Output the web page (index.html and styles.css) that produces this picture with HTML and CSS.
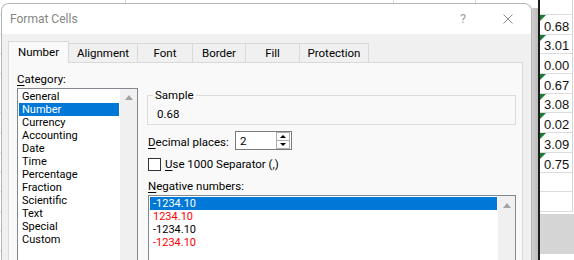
FILE: index.html
```html
<!DOCTYPE html>
<html lang="en">
<head>
    <meta charset="UTF-8">
    <meta name="viewport" content="width=device-width, initial-scale=1.0">
    <title>Format Cells</title>
    <link rel="stylesheet" href="styles.css">
</head>
<body>
    <div class="desk">
        <div class="edge"></div>
        <div class="dialog">
            <div class="titlebar">
                <span class="title">Format Cells</span>
                <span class="help">?</span>
                <svg class="close" width="10" height="10" viewBox="0 0 10 10">
                    <path d="M0.5 0.5 L9.5 9.5 M9.5 0.5 L0.5 9.5" stroke="#8c8c8c" stroke-width="1" fill="none" />
                </svg>
            </div>
            <div class="dialog-body">
                <div class="tabs">
                    <div class="tab active tab-number">Number</div>
                    <div class="tab tab-alignment">Alignment</div>
                    <div class="tab tab-font">Font</div>
                    <div class="tab tab-border">Border</div>
                    <div class="tab tab-fill">Fill</div>
                    <div class="tab tab-protection">Protection</div>
                </div>
                <div class="panel">
                    <div class="col-left">
                        <div class="label"><u>C</u>ategory:</div>
                        <div class="listbox list-category">
                            <ul class="items">
                                <li>General</li>
                                <li class="selected">Number</li>
                                <li>Currency</li>
                                <li>Accounting</li>
                                <li>Date</li>
                                <li>Time</li>
                                <li>Percentage</li>
                                <li>Fraction</li>
                                <li>Scientific</li>
                                <li>Text</li>
                                <li>Special</li>
                                <li>Custom</li>
                            </ul>
                            <div class="scrollbar"><span class="arrow-up"></span></div>
                        </div>
                    </div>
                    <div class="col-right">
                        <fieldset class="sample">
                            <legend>Sample</legend>
                            <div class="sample-value">0.68</div>
                        </fieldset>
                        <div class="row-decimal">
                            <label class="decimal-label"><u>D</u>ecimal places:</label>
                            <div class="spin">
                                <span class="spin-value">2</span>
                                <div class="spin-btns">
                                    <span class="spin-btn"><span class="tri-up"></span></span>
                                    <span class="spin-btn"><span class="tri-down"></span></span>
                                </div>
                            </div>
                        </div>
                        <div class="row-check">
                            <span class="checkbox"></span>
                            <span><u>U</u>se 1000 Separator (,)</span>
                        </div>
                        <div class="label label-negative"><u>N</u>egative numbers:</div>
                        <div class="listbox list-negative">
                            <ul class="items">
                                <li class="selected">-1234.10</li>
                                <li class="red">1234.10</li>
                                <li>-1234.10</li>
                                <li class="red">-1234.10</li>
                            </ul>
                            <div class="scrollbar"><span class="arrow-up"></span></div>
                        </div>
                    </div>
                </div>
            </div>
        </div>
        <div class="shade"></div>
        <div class="sheet">
            <div class="cell cell-head"></div>
            <div class="cell flag">0.68</div>
            <div class="cell flag">3.01</div>
            <div class="cell">0.00</div>
            <div class="cell flag">0.67</div>
            <div class="cell flag">3.08</div>
            <div class="cell flag">0.02</div>
            <div class="cell flag">3.09</div>
            <div class="cell flag">0.75</div>
            <div class="cell"></div>
            <div class="cell"></div>
            <div class="grey-block"></div>
        </div>
    </div>
</body>
</html>
```

FILE: styles.css
```css
* {
    box-sizing: border-box;
}
body {
    margin: 0;
    width: 574px;
    height: 260px;
    overflow: hidden;
    font-family: Roboto, "Noto Sans", sans-serif;
    font-size: 11.5px;
    color: #000;
    background:
        linear-gradient(#d6d6d6, #d6d6d6) 125px 0 / 1px 100% no-repeat,
        linear-gradient(#d6d6d6, #d6d6d6) 393px 0 / 1px 100% no-repeat,
        linear-gradient(#d6d6d6, #d6d6d6) 475px 0 / 1px 100% no-repeat,
        repeating-linear-gradient(to bottom, #fff 0 18.7px, #dcdcdc 18.7px 19.7px) 0 -4.7px,
        #fff;
}
ul {
    list-style: none;
    margin: 0;
    padding: 0;
}
u {
    text-decoration: underline;
    text-underline-offset: 2px;
}

.desk {
    display: flex;
    align-items: flex-start;
    height: 260px;
}
.edge {
    width: 1px;
}

/* dialog window */
.dialog {
    width: 531px;
    height: 270px;
    margin-top: 3px;
    border: 1px solid #b5b5b5;
    border-bottom: 0;
    border-radius: 8px 8px 0 0;
    background: #f0f0f0;
    overflow: hidden;
}
.titlebar {
    display: flex;
    align-items: center;
    height: 30px;
    padding: 0 18px 0 8px;
    background: #fff;
}
.title {
    color: #858585;
    font-size: 12px;
}
.help {
    margin-left: auto;
    margin-right: 37px;
    color: #9a9a9a;
    font-size: 12px;
}
.close {
    display: block;
}
.dialog-body {
    padding: 0 8px 0 6px;
}

/* tabs */
.tabs {
    display: flex;
    align-items: flex-end;
    padding-top: 7px;
    height: 28px;
}
.tab {
    height: 19px;
    line-height: 18px;
    text-align: center;
    background: #f0f0f0;
    border-top: 1px solid #d9d9d9;
    border-right: 1px solid #d9d9d9;
}
.tab.active {
    position: relative;
    z-index: 1;
    height: 22px;
    line-height: 21px;
    margin-bottom: -1px;
    background: #f9f9f9;
    border-left: 1px solid #d9d9d9;
}
.tab-number { width: 61px; }
.tab-alignment { width: 69px; }
.tab-font { width: 55px; }
.tab-border { width: 53px; }
.tab-fill { width: 54px; }
.tab-protection { width: 69px; }

.panel {
    display: flex;
    gap: 10px;
    height: 220px;
    padding: 9px 6px 0 8px;
    background: #f9f9f9;
    border: 1px solid #d9d9d9;
}
.label {
    line-height: 14px;
}
.col-left {
    width: 121px;
}
.col-left .label {
    margin-bottom: 2px;
}
.col-right {
    width: 368px;
}

/* list boxes */
.listbox {
    display: flex;
    background: #fff;
    border: 1px solid #828790;
    border-right: 0;
}
.listbox .items {
    flex: 1;
    padding: 1px;
}
.listbox li {
    height: 13px;
    font-size: 11px;
    line-height: 13px;
    padding-left: 3px;
    white-space: nowrap;
}
.listbox li.selected {
    background: #0078d7;
    color: #fff;
}
.listbox li.red {
    color: #f00;
}
.scrollbar {
    width: 18px;
    background: #f0f0f0;
    border-right: 1px solid #828790;
    display: flex;
    justify-content: center;
}
.arrow-up {
    width: 0;
    height: 0;
    margin-top: 6px;
    border-left: 4px solid transparent;
    border-right: 4px solid transparent;
    border-bottom: 5px solid #a3a3a3;
}
.list-category {
    height: 180px;
}
.list-negative {
    height: 90px;
    margin-top: 2px;
}
.list-negative .arrow-up {
    margin-top: 7px;
}

/* sample group */
.sample {
    margin: 17px 0 0 -1px;
    padding: 0 6px 3px 5px;
    min-width: 0;
    border: 1px solid #dcdcdc;
}
.sample legend {
    padding: 0 2px;
    line-height: 13px;
}
.sample-value {
    margin-top: 5px;
    padding-left: 4px;
    line-height: 14px;
}

/* decimal places */
.row-decimal {
    display: flex;
    align-items: flex-start;
    margin-top: 6px;
}
.decimal-label {
    width: 87px;
    margin-top: 4px;
    line-height: 14px;
}
.spin {
    display: flex;
    width: 57px;
    height: 19px;
    background: #fff;
    border: 1px solid #7a7a7a;
}
.spin-value {
    flex: 1;
    padding: 2px 0 0 4px;
    line-height: 14px;
}
.spin-btns {
    display: flex;
    flex-direction: column;
    width: 15px;
    padding: 0 1px 0 0;
}
.spin-btn {
    flex: 1;
    display: flex;
    align-items: center;
    justify-content: center;
    background: #fdfdfd;
    border: 1px solid #adadad;
}
.spin-btn + .spin-btn {
    border-top: 0;
}
.tri-up {
    width: 0;
    height: 0;
    border-left: 3px solid transparent;
    border-right: 3px solid transparent;
    border-bottom: 3px solid #000;
}
.tri-down {
    width: 0;
    height: 0;
    border-left: 3px solid transparent;
    border-right: 3px solid transparent;
    border-top: 3px solid #000;
}

/* separator checkbox */
.row-check {
    display: flex;
    align-items: center;
    gap: 4px;
    margin-top: 7px;
    line-height: 14px;
}
.checkbox {
    width: 13px;
    height: 13px;
    background: #fff;
    border: 1px solid #333;
}
.label-negative {
    margin-top: 8px;
}

/* spreadsheet behind the dialog */
.shade {
    width: 6px;
    height: 252px;
    margin-top: 8px;
    background: linear-gradient(to right, #cfcfcf, #bdbdbd);
}
.sheet {
    width: 36px;
    height: 260px;
    border-left: 2px solid #1c1c1c;
    background: #fff;
}
.cell {
    position: relative;
    width: 33px;
    height: 19.7px;
    padding: 0 0 0 4px;
    display: flex;
    align-items: flex-end;
    font-family: "Liberation Sans", Arial, sans-serif;
    font-size: 13px;
    line-height: 15px;
    color: #111;
    border-right: 1px solid #d4d4d4;
    border-bottom: 1px solid #dcdcdc;
}
.cell-head {
    height: 15px;
}
.flag::before {
    content: '';
    position: absolute;
    left: 0;
    top: 0;
    border-top: 6px solid #1d7a36;
    border-right: 6px solid transparent;
}
.grey-block {
    height: 40px;
    margin-top: 2px;
    background: #d5d5d5;
}
```
